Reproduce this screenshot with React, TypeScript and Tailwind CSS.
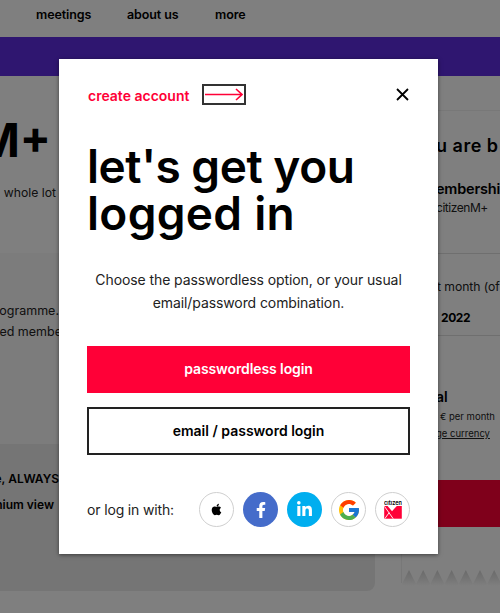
import React from 'react';
import { FaApple, FaFacebookF, FaLinkedinIn } from 'react-icons/fa';
import { FcGoogle } from 'react-icons/fc';

const CitizenLogo: React.FC = () => (
  <svg viewBox="0 0 18 19" className="h-[19px] w-[18px]" aria-label="citizenM">
    <text x="0.1" y="5" fontSize="6.6" fontWeight="600" fontFamily="Inter, sans-serif" textLength="17.8" lengthAdjust="spacingAndGlyphs">citizen</text>
    <path d="M0.2 6H17.8V18.7H0.2Z" fill="#ff0037" />
    <path d="M3.6 6H12.8L8 11.2Z" fill="white" />
    <path d="M0.5 6.4L9.2 18.7M0.8 18.7L5.2 12.6" fill="none" stroke="white" strokeWidth="0.9" />
  </svg>
);

const SOCIALS = [
  { name: 'apple', className: 'border border-[#cfcfcf] bg-white text-black', icon: <FaApple className="size-[13px]" /> },
  { name: 'facebook', className: 'bg-[#456cca] text-white', icon: <FaFacebookF className="size-[16px]" /> },
  { name: 'linkedin', className: 'bg-[#00aeef] text-white', icon: <FaLinkedinIn className="size-[17px]" /> },
  { name: 'google', className: 'border border-[#cfcfcf] bg-white', icon: <FcGoogle className="size-[24px]" /> },
  { name: 'citizenM', className: 'border border-[#cfcfcf] bg-white', icon: <CitizenLogo /> },
];

// torn paper edge under the price card
const TornEdge: React.FC = () => (
  <svg viewBox="0 0 99 18" className="h-[18px] w-[99px] shrink-0">
    <defs>
      <linearGradient id="torn" x1="0" y1="0" x2="0" y2="1">
        <stop offset="0" stopColor="#d4d4d4" />
        <stop offset="0.6" stopColor="#ececec" />
        <stop offset="1" stopColor="#ffffff" />
      </linearGradient>
    </defs>
    <path d="M0.5 0V14" stroke="#eeeeee" />
    {[0, 1, 2, 3, 4, 5, 6].map((i) => (
      <path key={i} d="M1 15L8 1L15 15L13 17H3Z" fill="url(#torn)" transform={`translate(${i * 14.2} 0)`} />
    ))}
  </svg>
);

const Page: React.FC = () => (
  <div className="flex h-full flex-col whitespace-nowrap">
    <header className="flex h-[37px] shrink-0 items-center pb-[7px] pl-9 text-[12.5px] leading-[30px] font-semibold">
      <span className="w-[91px] tracking-[-0.1px]">meetings</span>
      <span className="w-[88px] tracking-[-0.1px]">about us</span>
      <span className="tracking-[-0.1px]">more</span>
    </header>
    <div className="h-[39px] shrink-0 bg-[#5e2ce0]" />
    <div className="flex flex-1">
      <main className="flex w-[401px] shrink-0 flex-col">
        <div className="flex h-[177px] flex-col pt-[38px]">
          <h2 className="flex w-[51px] justify-end text-[46px] leading-[52px] font-bold">M+</h2>
          <p className="mt-[17px] flex w-[56px] justify-end text-[12.2px] leading-5 text-[#222]">whole lot</p>
        </div>
        <div className="flex h-[191px] flex-col bg-[#f9f9f9] pt-[47px] text-[12.5px] leading-[21px] text-[#222]">
          <p className="flex w-[59px] justify-end">ogramme.</p>
          <p className="flex w-[62px] justify-end">ed membe</p>
        </div>
        <div className="flex h-[147px] w-[375px] flex-col rounded-br-lg bg-[#ebebeb] pt-[22px] text-[12px] leading-[26px] font-semibold">
          <p className="flex w-[59px] justify-end">e, ALWAYS</p>
          <p className="flex w-[54px] justify-end">nium view</p>
        </div>
      </main>
      <aside className="flex w-[99px] flex-col pt-[34px]">
        <div className="flex h-[459px] flex-col border-t border-l border-[#f0f0f0]">
          <div className="flex h-[143px] flex-col border-b border-[#dedede] pt-[23px] pl-[34px]">
            <h3 className="text-[18px] leading-6 font-semibold tracking-[0.5px]">u are b</h3>
            <p className="mt-[21px] text-[14.5px] leading-5 font-semibold tracking-[-0.2px]">embershi</p>
            <p className="text-[12px] leading-[18px] tracking-[-0.45px] text-[#222]">citizenM+</p>
          </div>
          <div className="flex h-[82px] flex-col border-b border-[#dedede] pt-[23px] pl-[35px]">
            <p className="text-[12.2px] leading-5 tracking-[-0.05px] text-[#222]">t month (of</p>
            <p className="mt-[11px] pl-1 text-[12px] leading-5 font-bold tracking-[-0.4px]">2022</p>
          </div>
          <div className="flex h-[144px] flex-col pt-[51px] pl-[34px]">
            <p className="text-[14px] leading-5 font-semibold">al</p>
            <p className="mt-[1px] pl-1 text-[9.5px] leading-[18px] text-[#222]">€ per month</p>
            <p className="text-[9.5px] leading-[15px] text-[#222] underline">ge currency</p>
          </div>
          <div className="h-[47px] bg-[#ff0037]" />
        </div>
        <TornEdge />
      </aside>
    </div>
  </div>
);

const LoginDialog: React.FC = () => (
  <div role="dialog" className="absolute top-[59px] left-[59px] flex h-[495px] w-[379px] flex-col bg-white px-7 shadow-[0_1px_4px_rgba(0,0,0,0.5)]">
    <div className="flex h-[46px] items-end justify-between">
      <div className="flex items-end">
        <a className="w-[115px] pl-[1px] text-[14px] leading-[18px] font-semibold whitespace-nowrap text-[#ff0037]">create account</a>
        <span className="flex h-[21px] w-[44px] items-center justify-center border-2 border-[#333]">
          <svg viewBox="0 0 38 14" className="h-[14px] w-[38px]" fill="none" stroke="#ff0037" strokeWidth="1.6">
            <path d="M0 6.5H37M31 1L37 6.5L31 12" />
          </svg>
        </span>
      </div>
      <button aria-label="Close" className="mr-[1px] mb-[4px] flex size-[13px] items-center justify-center">
        <svg viewBox="0 0 13 13" className="size-[13px]" stroke="black" strokeWidth="1.8">
          <path d="M1 1L12 12M12 1L1 12" />
        </svg>
      </button>
    </div>
    <h1 className="mt-[38px] text-[46px] leading-[47px] font-semibold whitespace-nowrap">
      <span className="tracking-[-0.45px]">let's get you</span><br /><span className="tracking-[0.3px]">logged in</span>
    </h1>
    <p className="mt-[31px] text-center text-[14px] leading-[23px] tracking-[-0.09px] whitespace-nowrap text-[#222]">
      Choose the passwordless option, or your usual<br />email/password combination.
    </p>
    <button className="mt-[32px] h-[47px] shrink-0 bg-[#ff0037] pb-[2px] text-[14px] font-semibold tracking-[-0.1px] text-white">passwordless login</button>
    <button className="mt-[14px] h-[48px] shrink-0 border-2 border-[#222] pb-[1px] text-[14px] font-semibold">email / password login</button>
    <div className="mt-[37px] flex items-center">
      <span className="w-[112px] text-[14px] tracking-[-0.15px] whitespace-nowrap text-[#222]">or log in with:</span>
      <div className="flex gap-[9px]">
        {SOCIALS.map((s) => (
          <button key={s.name} aria-label={s.name} className={`flex size-[35px] items-center justify-center rounded-full ${s.className}`}>
            {s.icon}
          </button>
        ))}
      </div>
    </div>
  </div>
);

const App: React.FC = () => (
  <div className="relative h-[613px] w-[500px] overflow-hidden bg-white font-['Inter',sans-serif] text-black">
    <Page />
    <div className="absolute inset-0 bg-black/50" />
    <LoginDialog />
  </div>
);

export default App;
